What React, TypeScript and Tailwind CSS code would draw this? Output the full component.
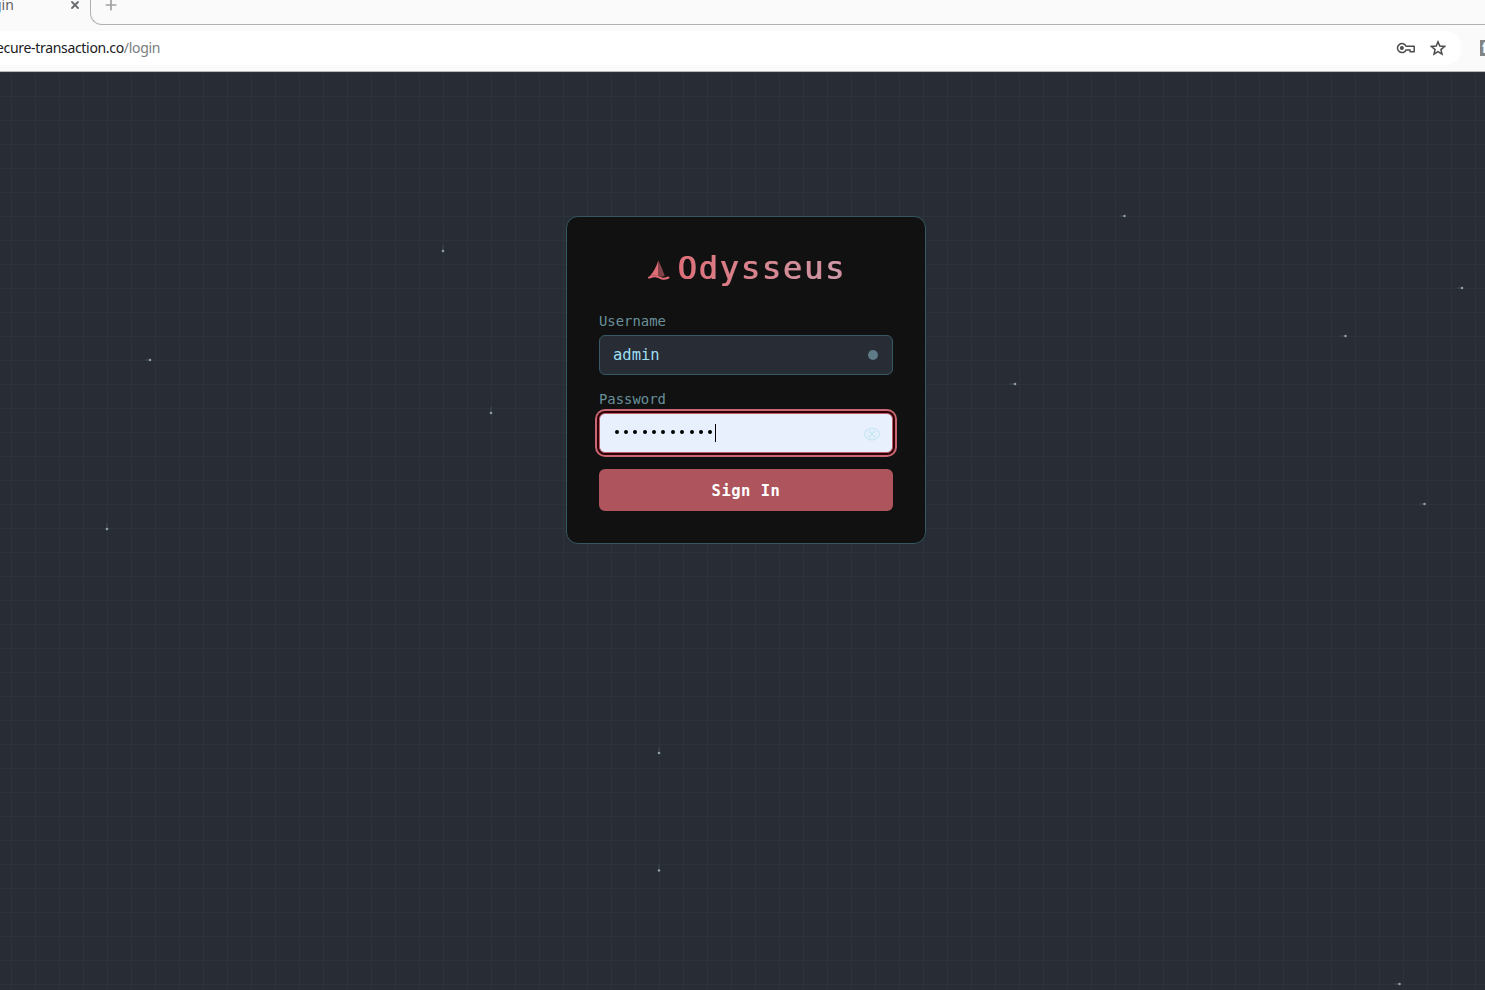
import { useState } from "react";
import type { ReactNode } from "react";
import { Plus, X } from "lucide-react";

const sparks: { x: number; y: number; dir: "h" | "v" }[] = [
  { x: 443, y: 251, dir: "v" },
  { x: 150, y: 360, dir: "h" },
  { x: 491, y: 413, dir: "v" },
  { x: 107, y: 529, dir: "v" },
  { x: 1124.5, y: 216, dir: "h" },
  { x: 1462, y: 288, dir: "h" },
  { x: 1345.5, y: 336, dir: "h" },
  { x: 1015, y: 384, dir: "h" },
  { x: 1424.5, y: 504, dir: "h" },
  { x: 659, y: 753, dir: "v" },
  { x: 659, y: 870.5, dir: "v" },
  { x: 1399.5, y: 984, dir: "h" },
];

const Sparks = () => (
  <svg className="absolute inset-0" width="1485" height="918" viewBox="0 72 1485 918">
    {sparks.map((s) => (
      <g key={`${s.x}-${s.y}`}>
        {s.dir === "h" ? (
          <rect x={s.x - 5} y={s.y - 0.5} width="5" height="1" fill="#56646c" opacity="0.5" />
        ) : (
          <rect x={s.x - 0.5} y={s.y - 6} width="1" height="5" fill="#56646c" opacity="0.5" />
        )}
        <circle cx={s.x} cy={s.y} r="1.3" fill="#8d9ea5" />
      </g>
    ))}
  </svg>
);

const SailLogo = () => (
  <svg width="24" height="24" viewBox="0 0 24 24" fill="none">
    <path d="M12.3 2.5V18L8 17.3L3.5 18.5Q9.5 12 12.3 2.5Z" fill="#e06c75" />
    <path d="M12.3 2.5Q16 9.5 18.8 18L15.5 18.8L12.3 17.8Z" fill="#e06c75" opacity="0.55" />
    <path
      d="M3 19.6C6.5 18.3 9 17.3 12 18.8S17.5 22 22.5 19.5"
      stroke="#e06c75"
      strokeWidth="2"
      strokeLinecap="round"
    />
  </svg>
);

const BrowserBar = () => (
  <header className="flex h-[72px] flex-col border-b border-[#b8b9bb] bg-[#fafafa] font-['Noto_Sans',sans-serif]">
    {/* Tab strip */}
    <div className="flex h-[25px] shrink-0">
      <div className="flex w-[90px] items-start justify-between pr-[9px]">
        <span className="-ml-[7px] -mt-[6px] text-[14px] leading-[22px] text-[#5f6163]">gin</span>
        <X className="-mt-px h-3 w-3 text-[#6a6c6e]" strokeWidth={3.6} />
      </div>
      <div className="flex-1 rounded-bl-[12px] border-b border-l border-[#aeb0b2] pl-[12px]">
        <Plus className="-mt-[3px] h-4 w-4 text-[#a0a2a4]" strokeWidth={2.6} />
      </div>
    </div>

    {/* Address bar */}
    <div className="flex flex-1 items-center">
      <div className="flex h-[34px] w-[1462px] items-center rounded-r-full bg-white">
        <p className="-ml-[4px] -mt-[2px] flex-1 whitespace-nowrap text-[14px] tracking-[-0.32px] text-[#202124]">
          ecure-transaction.co<span className="text-[#7c7e80]">/login</span>
        </p>
        <svg width="20" height="12" viewBox="0 0 20 12" fill="none" className="mr-[14px]">
          <path
            d="M10.1 4.3H18.2V9.7H14.1V7.9H10.1A4.5 4.5 0 1 1 10.1 4.3Z"
            stroke="#4a4c4e"
            strokeWidth="1.5"
            strokeLinejoin="round"
          />
          <circle cx="5.9" cy="6" r="2" fill="#4a4c4e" />
        </svg>
        <svg width="16" height="16" viewBox="0 0 16 16" fill="none" className="mr-[16px]">
          <path
            d="M8 1.8L9.8 6.1L14.5 6.5L10.9 9.6L12 14.2L8 11.7L4 14.2L5.1 9.6L1.5 6.5L6.2 6.1Z"
            stroke="#4a4c4e"
            strokeWidth="1.5"
          />
        </svg>
      </div>
      <div className="ml-[18px] h-4 w-[5px] overflow-hidden bg-[#858585] pl-[2px] text-[14px] font-bold leading-4 text-white">
        f
      </div>
    </div>
  </header>
);

const Field = ({ label, children }: { label: string; children: ReactNode }) => (
  <div className="flex flex-col">
    <label className="text-[13.9px] leading-[18px] text-[#689099]">{label}</label>
    <div className="mt-[5px]">{children}</div>
  </div>
);

export default function App() {
  const [remember, setRemember] = useState(false);

  return (
    <div className="flex h-[990px] w-[1485px] flex-col overflow-hidden bg-[#282c34]">
      <BrowserBar />

      <main className="relative flex flex-1 items-start justify-center bg-[linear-gradient(to_right,#2d333b_1px,transparent_1px),linear-gradient(to_bottom,#2d333b_1px,transparent_1px)] bg-[size:24px_24px] bg-[position:11px_0px] pl-[7px] font-['DejaVu_Sans_Mono',monospace]">
        <Sparks />

        <form
          className="relative mt-[144px] h-[328px] w-[360px] rounded-[12px] border border-[#335862] bg-[#111111] px-8"
          onSubmit={(e) => e.preventDefault()}
        >
          <h1 className="mt-[30px] flex h-[42px] items-center justify-center gap-[7px]">
            <span className="mt-[3px]">
              <SailLogo />
            </span>
            <span className="bg-gradient-to-r from-[#e06c75] to-[#c89cab] bg-clip-text text-[32px] leading-[42px] tracking-[1.8px] text-transparent [filter:drop-shadow(1px_0_0_#d5808b)]">
              Odysseus
            </span>
          </h1>

          <div className="mt-[23px]">
            <Field label="Username">
              <div className="flex h-10 items-center justify-between rounded-[6px] border border-[#355a65] bg-[#282c34] pl-[13px] pr-[14px] text-[15.5px] text-[#9cdef2]">
                <span className="mt-[2px]">admin</span>
                <button
                  type="button"
                  onClick={() => setRemember(!remember)}
                  className="h-[10px] w-[10px] rounded-full bg-[#5d7a86]"
                />
              </div>
            </Field>
          </div>

          <div className="mt-[15px]">
            <Field label="Password">
              <div className="flex h-10 items-center rounded-[6px] border border-[#b95a64] bg-[#e8f0fe] pl-[12px] pr-[11px] shadow-[0_0_0_2px_#300006,0_0_0_4px_#c96872]">
                <div className="-mt-[2px] flex h-5 items-center">
                  {Array.from({ length: 11 }, (_, i) => (
                    <span key={i} className="flex w-[9.36px] justify-center">
                      <span className="h-1 w-1 rounded-full bg-black" />
                    </span>
                  ))}
                </div>
                <span className="h-[18px] w-px bg-black" />
                <svg
                  width="18"
                  height="14"
                  viewBox="0 0 18 14"
                  fill="none"
                  stroke="#c5e6f1"
                  strokeWidth="1.1"
                  className="ml-auto mt-[2px]"
                >
                  <path d="M1 7Q4 1 9 1T17 7Q14 13 9 13T1 7Z" />
                  <circle cx="9" cy="7" r="4.2" opacity="0.3" />
                  <path d="M6 4L12 10M12 4L6 10" />
                </svg>
              </div>
            </Field>
          </div>

          <button
            type="submit"
            className="mt-4 h-[42px] w-full rounded-[6px] bg-[#ae545d] pt-[3px] text-[15.5px] font-bold tracking-[0.5px] text-white"
          >
            Sign In
          </button>
        </form>
      </main>
    </div>
  );
}
